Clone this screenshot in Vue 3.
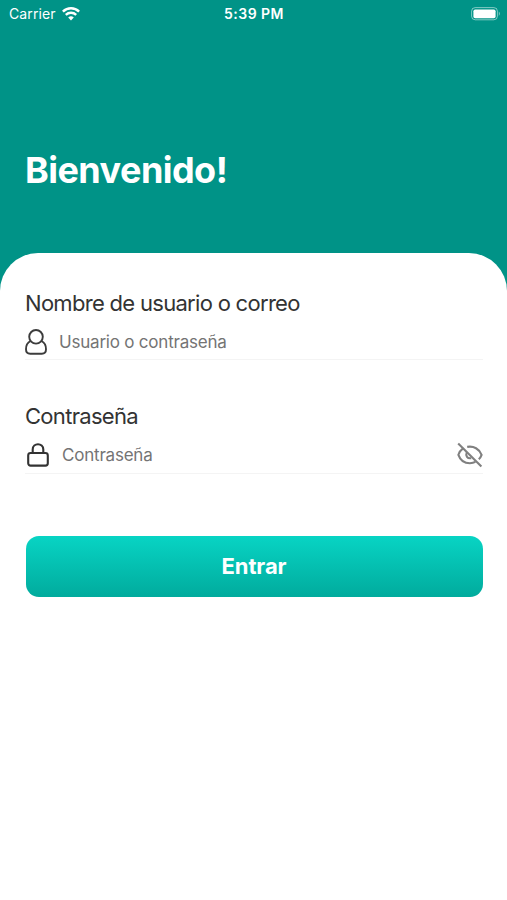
<template>
  <div class="container">
    <div class="status-bar">
      <div class="carrier">
        <span>Carrier</span>
        <svg class="wifi" width="18" height="14" viewBox="0 0 18 14" fill="none" stroke="#fff">
          <path d="M0.9 4.6 C5.5 0.2 12.5 0.2 17.1 4.6" stroke-width="2.5" />
          <path d="M3.8 7.8 C6.8 5 11.2 5 14.2 7.8" stroke-width="2.4" />
          <path d="M6.2 10.4 Q9 8.2 11.8 10.4 L9 13.4 Z" fill="#fff" stroke="none" />
        </svg>
      </div>
      <span class="time">5:39 PM</span>
      <svg class="battery" width="30" height="14" viewBox="0 0 30 14">
        <rect x="0.6" y="0.6" width="25.8" height="12.2" rx="3.6" fill="none" stroke="#fff" stroke-opacity="0.5" />
        <rect x="2.4" y="2.4" width="22.2" height="8.8" rx="1.8" fill="#fff" />
        <path d="M27.8 4.5 Q30 6.7 27.8 9 Z" fill="#fff" fill-opacity="0.5" />
      </svg>
    </div>

    <div class="header">
      <h1 class="title">Bienvenido!</h1>
    </div>

    <form class="footer" @submit.prevent="handleSubmit">
      <label class="label label-user" for="usuario">Nombre de usuario o correo</label>
      <div class="action">
        <svg class="icon-user" width="22" height="26" viewBox="0 0 22 26" fill="none" stroke="#3c3c3c" stroke-width="1.9">
          <circle cx="11" cy="7.8" r="6.8" />
          <path d="M5.6 12 C2.6 13.4 1 16.8 1 20.3 C1 23.4 2.5 24.8 5.2 24.8 H16.8 C19.5 24.8 21 23.4 21 20.3 C21 16.8 19.4 13.4 16.4 12" />
        </svg>
        <input id="usuario" v-model="formData.usuario" class="input input-user" type="text" placeholder="Usuario o contraseña">
      </div>

      <label class="label label-pass" for="password">Contraseña</label>
      <div class="action">
        <svg class="icon-lock" width="22" height="24" viewBox="0 0 22 24" fill="none" stroke="#333" stroke-width="2.1" stroke-linejoin="round">
          <rect x="1.2" y="10" width="19.6" height="12.6" rx="2.4" />
          <path d="M5.7 10 V6.5 C5.7 -0.5 16.3 -0.5 16.3 6.5 V10" />
        </svg>
        <input
          id="password"
          v-model="formData.password"
          class="input input-pass"
          :type="showPassword ? 'text' : 'password'"
          placeholder="Contraseña"
        >
        <button type="button" class="toggle" aria-label="Mostrar contraseña" @click="showPassword = !showPassword">
          <svg width="26" height="26" viewBox="0 0 26 26" fill="none" stroke="#808080" stroke-width="2.1">
            <path d="M1.2 1.4 L24.4 24.6" />
            <path d="M5.8 6.6 C3.8 8 2.2 10.2 1.4 12.8 C3.2 18 7.7 21.2 12.9 21.2 C14.9 21.2 16.8 20.8 18.4 19.9" />
            <path d="M10.2 4.9 C16.8 3.7 22.4 7 24.6 12.8 C24 14.6 23.1 16 21.8 17.2" />
            <path d="M9.8 10.4 C8.2 13.8 10.4 16.9 14.2 16.2" />
          </svg>
        </button>
      </div>

      <button type="submit" class="sign-in">Entrar</button>
    </form>
  </div>
</template>

<script setup>
import { reactive, ref } from 'vue';

const formData = reactive({
  usuario: '',
  password: ''
});

const showPassword = ref(false);

const handleSubmit = () => {
  console.log('Login:', formData.usuario);
};
</script>

<style>
body {
  margin: 0;
  background: #009387;
}
</style>

<style scoped>
.container {
  display: flex;
  flex-direction: column;
  height: 900px;
  overflow: hidden;
  background: #009387;
  font-family: Inter, "Liberation Sans", sans-serif;
}

.status-bar {
  display: grid;
  grid-template-columns: 1fr auto 1fr;
  align-items: center;
  box-sizing: border-box;
  height: 27px;
  padding: 0 6px 0 9px;
  color: #fff;
  font-size: 14px;
}

.carrier {
  display: flex;
  align-items: center;
  gap: 6px;
  letter-spacing: 0.1px;
}

.time {
  margin-right: 2px;
  font-weight: 600;
  letter-spacing: 0.45px;
}

.battery {
  justify-self: end;
}

.header {
  box-sizing: border-box;
  height: 226px;
  padding: 121px 25px 0;
}

.title {
  margin: 0;
  color: #fff;
  font-size: 36px;
  font-weight: 700;
  line-height: 44px;
  letter-spacing: -0.55px;
}

.footer {
  display: flex;
  flex-direction: column;
  flex: 1;
  padding: 36px 24px 0 25px;
  border-radius: 38px 38px 0 0;
  background: #fff;
}

.label {
  height: 28px;
  color: #333;
  font-size: 22px;
  line-height: 28px;
  letter-spacing: -0.7px;
}

.label-pass {
  margin-top: 42px;
}

.action {
  display: flex;
  align-items: center;
  box-sizing: border-box;
  height: 43px;
  padding-top: 7px;
  border-bottom: 1px solid #f4f4f4;
}

.label-pass + .action {
  height: 44px;
  padding-top: 6px;
}

.input {
  flex: 1;
  min-width: 0;
  padding: 0;
  border: 0;
  outline: 0;
  background: transparent;
  color: #333;
  font-family: inherit;
  font-size: 17px;
  letter-spacing: -0.21px;
}

.input::placeholder {
  color: #747474;
  opacity: 1;
}

.input-user {
  margin-left: 12px;
}

.icon-lock {
  margin-left: 2px;
}

.input-pass {
  margin-left: 13px;
}

.toggle {
  display: flex;
  padding: 0;
  border: 0;
  background: none;
}

.sign-in {
  height: 61px;
  margin: 61.5px 0.5px 0 0.5px;
  padding: 0;
  border: 0;
  border-radius: 13px;
  background: linear-gradient(#08d4c4, #01ab9d);
  color: #fff;
  font-family: inherit;
  font-size: 22px;
  font-weight: 700;
  letter-spacing: -0.1px;
}
</style>
